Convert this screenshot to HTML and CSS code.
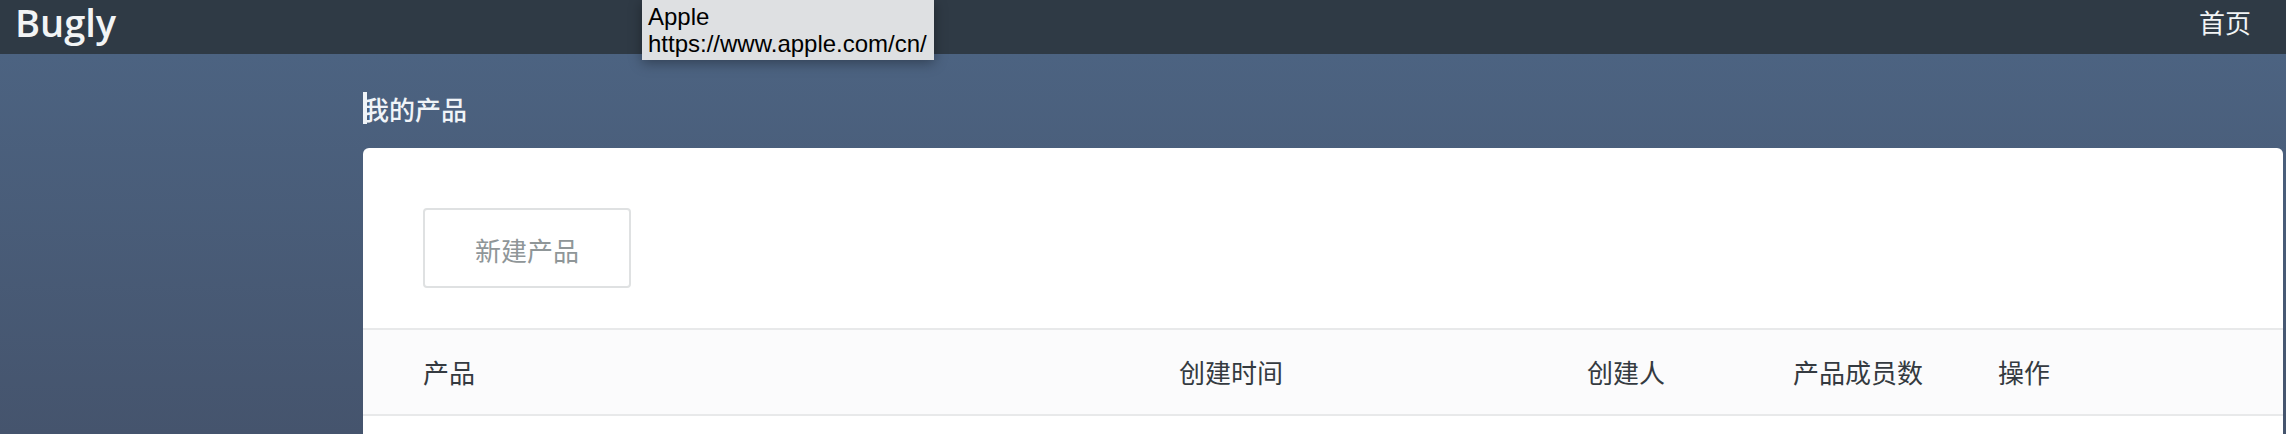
FILE: index.html
```html
<!DOCTYPE html>
<html lang="zh-CN">
<head>
    <meta charset="UTF-8">
    <title>Bugly</title>
    <link rel="stylesheet" href="styles.css">
</head>
<body>
    <div class="navbar">
        <div class="brand">Bugly</div>
        <div class="nav-link">首页</div>
    </div>
    <div class="tooltip">Apple<br>https://www.apple.com/cn/</div>
    <div class="main">
        <div class="page-title"><span class="caret"></span>我的产品</div>
        <div class="card">
            <div class="toolbar">
                <button class="btn">新建产品</button>
            </div>
            <div class="table-head">
                <div class="col-name">产品</div>
                <div class="col-time">创建时间</div>
                <div class="col-owner">创建人</div>
                <div class="col-members">产品成员数</div>
                <div class="col-action">操作</div>
            </div>
        </div>
    </div>
</body>
</html>
```
FILE: styles.css
```css
* {
    box-sizing: border-box;
}
html, body {
    height: 100%;
}
body {
    margin: 0;
    overflow: hidden;
    font-family: "Noto Sans CJK SC", "Liberation Sans", sans-serif;
    background: linear-gradient(180deg, #4d6584, #45546d);
}
.navbar {
    display: flex;
    justify-content: space-between;
    align-items: flex-start;
    height: 54px;
    padding: 0 35px 0 15px;
    background-color: #2f3a45;
    color: #fff;
}
.brand {
    font-family: "Open Sans", sans-serif;
    font-size: 38px;
    font-weight: 600;
    line-height: 44px;
    color: #f2f4f5;
}
.nav-link {
    font-size: 26px;
    line-height: 44px;
    color: #f2f4f5;
}
.tooltip {
    position: absolute;
    top: 0;
    left: 642px;
    width: 292px;
    height: 60px;
    padding: 3px 6px 0;
    font-family: "Liberation Sans", sans-serif;
    font-size: 24px;
    line-height: 27px;
    white-space: nowrap;
    color: #000;
    background-color: #dee0e2;
    box-shadow: 0 3px 12px rgba(0, 0, 0, 0.35);
}
.main {
    padding: 0 3px 0 363px;
}
.page-title {
    display: flex;
    align-items: center;
    height: 94px;
    padding-top: 14px;
    font-size: 26px;
    font-weight: 500;
    color: #f0f4f8;
}
.caret {
    width: 4px;
    height: 32px;
    margin-right: -4px;
    background-color: #f0f4f8;
}
.card {
    height: 300px;
    background-color: #fff;
    border-radius: 6px 6px 0 0;
}
.toolbar {
    height: 180px;
    padding: 60px 60px 0;
}
.btn {
    display: block;
    width: 208px;
    height: 80px;
    padding: 2px 0 0;
    font-family: inherit;
    font-size: 26px;
    color: #8f9698;
    background-color: #fff;
    border: 2px solid #dfe1e2;
    border-radius: 4px;
}
.table-head {
    display: flex;
    align-items: center;
    height: 88px;
    padding: 0 0 2px 60px;
    font-size: 26px;
    color: #343a40;
    background-color: #fbfbfc;
    border-top: 2px solid #e8e9ea;
    border-bottom: 2px solid #e8e9ea;
}
.col-name {
    width: 756px;
}
.col-time {
    width: 408px;
}
.col-owner {
    width: 206px;
}
.col-members {
    width: 205px;
}
```
